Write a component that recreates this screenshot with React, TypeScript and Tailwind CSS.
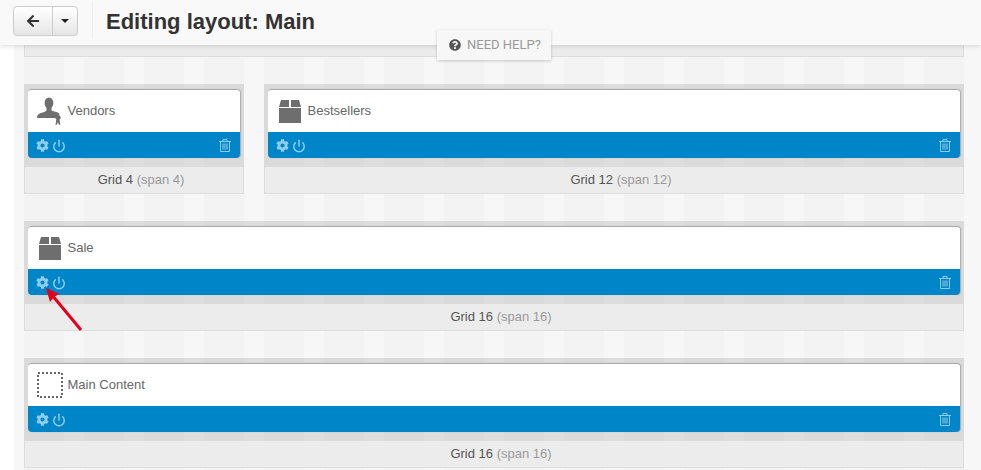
import { FaArrowLeft, FaCog, FaQuestionCircle } from 'react-icons/fa';
import { Power } from 'lucide-react';
import type { ReactNode } from 'react';

const stripes =
  'bg-[repeating-linear-gradient(90deg,#f3f3f3_0,#f3f3f3_40px,#f7f7f7_40px,#f7f7f7_60px)]';

function BoxIcon() {
  return (
    <svg width="22" height="23" viewBox="0 0 22 23" fill="#6e6e6e">
      <path d="M2 0h8v7H0zM12 0h8l2 7H12z" />
      <path d="M0 8h22v15H0z" />
    </svg>
  );
}

function VendorIcon() {
  return (
    <svg width="26" height="28" viewBox="0 0 26 28" fill="#6e6e6e">
      <ellipse cx="12" cy="6" rx="4.4" ry="5.6" />
      <path d="M9.5 10h5v3.5c2.5 1.2 5.5 1.3 7 2.4.7.5 1.1 1 1.3 1.6-1.6.2-3 1.4-3.5 3.5H0c0-2.4.8-3.6 2.2-4.3 2-1 5.3-1 7.3-3.2z" />
      <circle cx="21" cy="20.5" r="2.6" />
      <path d="M19.2 23l-.7 5 1.5-.6.9-2.4.9 2.4 1.5.6-.7-5z" />
    </svg>
  );
}

function DottedIcon() {
  return (
    <svg width="26" height="26" viewBox="0 0 26 26" fill="none">
      <rect x="1" y="1" width="24" height="24" stroke="#666" strokeWidth="2" strokeDasharray="2 2" />
    </svg>
  );
}

function TrashIcon() {
  return (
    <svg width="12" height="13" viewBox="0 0 12 13" fill="none" stroke="#8fcdee" strokeWidth="1">
      <path d="M0 2.5h12M4 2.5V.5h4v2M1.5 2.5v10h9v-10M4 4.5v6M6 4.5v6M8 4.5v6" />
    </svg>
  );
}

function Block({ width, icon, title, grid, span }: { width: string; icon: ReactNode; title: string; grid: string; span: string }) {
  return (
    <div className={width}>
      <div className="bg-black/10 px-[4px] pt-[5px] pb-[9px]">
        <div className="rounded-[4px] border-t border-[#aaa] shadow-[1px_0_1px_#aaa] overflow-hidden">
          <div className="h-[42px] bg-white flex items-center">
            <div className="w-[39.5px] flex justify-center shrink-0 pl-[4px]">{icon}</div>
            <span className="text-[13px] text-[#666]">{title}</span>
          </div>
          <div className="h-[26px] bg-[#0085c8] flex items-center pl-[8px] pr-[9px] pt-[1px] text-[#8fcdee]">
            <FaCog size={13} />
            <Power size={14} strokeWidth={2.5} className="ml-[3px]" />
            <span className="ml-auto">
              <TrashIcon />
            </span>
          </div>
        </div>
      </div>
      <div className="h-[27px] bg-[#ececec] border-x border-b border-[#ddd] flex items-center justify-center pl-[14px] text-[13px] text-[#555]">
        <span>
          {grid} <span className="text-[#999]">{span}</span>
        </span>
      </div>
    </div>
  );
}

export default function App() {
  return (
    <div className="relative h-[470px] overflow-hidden bg-white font-['Liberation_Sans',sans-serif]">
      <header className="relative z-10 h-[45px] bg-[#f9f9f9] shadow-[0_1px_5px_rgba(0,0,0,0.15)] flex items-center pl-[13px]">
        <div className="flex h-[30px] -mt-[3px] rounded-[4px] border border-[#ccc] bg-gradient-to-b from-white to-[#e6e6e6] text-[#333]">
          <div className="w-[39px] flex items-center justify-center border-r border-[#ccc]">
            <FaArrowLeft size={14} />
          </div>
          <div className="w-[24px] flex items-center justify-center">
            <span className="border-x-[4px] border-x-transparent border-t-[4px] border-t-[#222]" />
          </div>
        </div>
        <div className="ml-[14px] h-[36px] -mt-[6px] border-l border-[#eee]" />
        <h1 className="ml-[13px] -mt-[2px] text-[22px] font-bold text-[#333]">Editing layout: Main</h1>
      </header>

      <div className="absolute z-20 left-[437px] top-[30px] w-[114px] h-[30px] bg-[#f7f7f7] shadow-[0_1px_3px_rgba(0,0,0,0.2)] flex items-center pl-[12px] gap-[6px] font-['Roboto',sans-serif] text-[13px] text-[#999]">
        <FaQuestionCircle size={12} className="text-[#555]" />
        NEED HELP?
      </div>

      <div className="ml-[14px] h-[425px] bg-[#f7f7f7] pl-[10px]">
        <div className={`relative w-[940px] h-[425px] ${stripes}`}>
          <div className="h-[12px] bg-[#ececec] border-x border-b border-[#ddd]" />
          <div className="flex gap-5 mt-[27px]">
            <Block width="w-[220px]" icon={<VendorIcon />} title="Vendors" grid="Grid 4" span="(span 4)" />
            <Block width="w-[700px]" icon={<BoxIcon />} title="Bestsellers" grid="Grid 12" span="(span 12)" />
          </div>
          <div className="mt-[27px]">
            <Block width="w-[940px]" icon={<BoxIcon />} title="Sale" grid="Grid 16" span="(span 16)" />
          </div>
          <div className="mt-[27px]">
            <Block width="w-[940px]" icon={<DottedIcon />} title="Main Content" grid="Grid 16" span="(span 16)" />
          </div>
          <svg className="absolute left-[16px] top-[238px]" width="48" height="52" viewBox="0 0 48 52" fill="#e2001a">
            <path d="M41 47L12 12" stroke="#e2001a" strokeWidth="3" />
            <path d="M6 5l13 6-5 3-4 5z" />
          </svg>
        </div>
      </div>
    </div>
  );
}
